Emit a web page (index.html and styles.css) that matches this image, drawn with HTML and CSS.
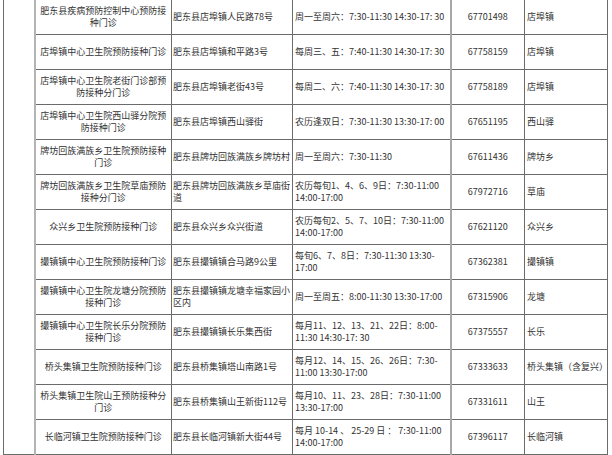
FILE: index.html
```html
<!DOCTYPE html>
<html lang="zh-CN">
<head>
<meta charset="utf-8">
<title>预防接种门诊</title>
<link rel="stylesheet" href="styles.css">
</head>
<body>
<table class="clinics">
  <colgroup>
    <col class="c-blank">
    <col class="c-name">
    <col class="c-addr">
    <col class="c-time">
    <col class="c-tel">
    <col class="c-area">
  </colgroup>
  <tbody>
    <tr>
      <td class="blank" rowspan="13"></td>
      <td class="name">肥东县疾病预防控制中心预防接<br>种门诊</td>
      <td class="addr">肥东县店埠镇人民路78号</td>
      <td class="time">周一至周六：7:30-11:30 14:30-17: 30</td>
      <td class="tel">67701498</td>
      <td class="area">店埠镇</td>
    </tr>
    <tr>
      <td class="name">店埠镇中心卫生院预防接种门诊</td>
      <td class="addr">肥东县店埠镇和平路3号</td>
      <td class="time">每周三、五：7:40-11:30 14:30-17: 30</td>
      <td class="tel">67758159</td>
      <td class="area">店埠镇</td>
    </tr>
    <tr>
      <td class="name">店埠镇中心卫生院老街门诊部预<br>防接种分门诊</td>
      <td class="addr">肥东县店埠镇老街43号</td>
      <td class="time">每周二、六：7:40-11:30 14:30-17: 30</td>
      <td class="tel">67758189</td>
      <td class="area">店埠镇</td>
    </tr>
    <tr>
      <td class="name">店埠镇中心卫生院西山驿分院预<br>防接种门诊</td>
      <td class="addr">肥东县店埠镇西山驿街</td>
      <td class="time">农历逢双日：7:30-11:30 13:30-17: 00</td>
      <td class="tel">67651195</td>
      <td class="area">西山驿</td>
    </tr>
    <tr>
      <td class="name">牌坊回族满族乡卫生院预防接种<br>门诊</td>
      <td class="addr">肥东县牌坊回族满族乡牌坊村</td>
      <td class="time">周一至周六：7:30-11:30</td>
      <td class="tel">67611436</td>
      <td class="area">牌坊乡</td>
    </tr>
    <tr>
      <td class="name">牌坊回族满族乡卫生院草庙预防<br>接种分门诊</td>
      <td class="addr">肥东县牌坊回族满族乡草庙街<br>道</td>
      <td class="time">农历每旬1、4、6、9日：7:30-11:00<br>14:00-17:00</td>
      <td class="tel">67972716</td>
      <td class="area">草庙</td>
    </tr>
    <tr>
      <td class="name">众兴乡卫生院预防接种门诊</td>
      <td class="addr">肥东县众兴乡众兴街道</td>
      <td class="time">农历每旬2、5、7、10日：7:30-11:00<br>14:00-17:00</td>
      <td class="tel">67621120</td>
      <td class="area">众兴乡</td>
    </tr>
    <tr>
      <td class="name">撮镇镇中心卫生院预防接种门诊</td>
      <td class="addr">肥东县撮镇镇合马路9公里</td>
      <td class="time">每旬6、7、8日：7:30-11:30 13:30-<br>17:00</td>
      <td class="tel">67362381</td>
      <td class="area">撮镇镇</td>
    </tr>
    <tr>
      <td class="name">撮镇镇中心卫生院龙塘分院预防<br>接种门诊</td>
      <td class="addr">肥东县撮镇镇龙塘幸福家园小<br>区内</td>
      <td class="time">周一至周五：8:00-11:30 13:30-17:00</td>
      <td class="tel">67315906</td>
      <td class="area">龙塘</td>
    </tr>
    <tr>
      <td class="name">撮镇镇中心卫生院长乐分院预防<br>接种门诊</td>
      <td class="addr">肥东县撮镇镇长乐集西街</td>
      <td class="time">每月11、12、13、21、22日：8:00-<br>11:30 14:30-17: 30</td>
      <td class="tel">67375557</td>
      <td class="area">长乐</td>
    </tr>
    <tr>
      <td class="name">桥头集镇卫生院预防接种门诊</td>
      <td class="addr">肥东县桥集镇塔山南路1号</td>
      <td class="time">每月12、14、15、26、26日：7:30-<br>11:00 13:30-17:00</td>
      <td class="tel">67333633</td>
      <td class="area">桥头集镇（含复兴）</td>
    </tr>
    <tr>
      <td class="name">桥头集镇卫生院山王预防接种分<br>门诊</td>
      <td class="addr">肥东县桥集镇山王新街112号</td>
      <td class="time">每月10、11、23、28日：7:30-11:00<br>13:30-17:00</td>
      <td class="tel">67331611</td>
      <td class="area">山王</td>
    </tr>
    <tr>
      <td class="name">长临河镇卫生院预防接种门诊</td>
      <td class="addr">肥东县长临河镇新大街44号</td>
      <td class="time">每月 10-14 、 25-29 日 ： 7:30-11:00<br>14:00-17:00</td>
      <td class="tel">67396117</td>
      <td class="area">长临河镇</td>
    </tr>
  </tbody>
</table>
</body>
</html>
```
FILE: styles.css
```css
html, body {
  margin: 0;
  padding: 0;
  background: #ffffff;
}

body {
  font-family: "Noto Sans CJK SC", "Noto Sans", "Liberation Sans", sans-serif;
  font-size: 9px;
  line-height: 12px;
  color: #333333;
  overflow: hidden;
}

.clinics {
  border-collapse: collapse;
  table-layout: fixed;
  width: 604px;
  margin: -1px 0 0 3px;
}

.c-blank { width: 31px; }
.c-name  { width: 137px; }
.c-addr  { width: 121px; }
.c-time  { width: 158px; }
.c-tel   { width: 74px; }
.c-area  { width: 83px; }

.clinics td {
  height: 34px;
  padding: 0;
  border: 1px solid #6b6b6b;
  vertical-align: middle;
  white-space: nowrap;
  overflow: hidden;
}

.clinics td.blank {
  border-right: 2px solid #b4b4b4;
}

.clinics td.name {
  text-align: center;
  padding: 0 3px;
}

.clinics td.addr {
  text-align: left;
  padding-left: 1px;
}

.clinics td.time {
  text-align: left;
  padding-left: 2px;
  border-right: 2px solid #a8a8a8;
}

.clinics td.tel {
  text-align: center;
}

.clinics td.area {
  text-align: left;
  padding-left: 2px;
}
```
